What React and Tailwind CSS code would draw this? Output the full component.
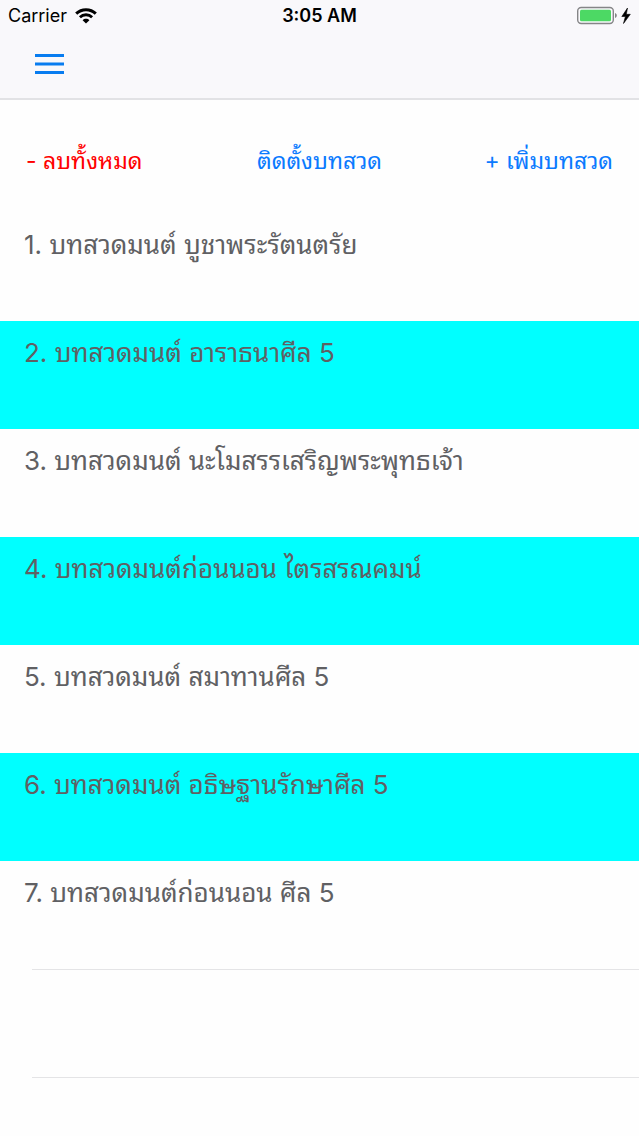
const rows = [
  'บทสวดมนต์ บูชาพระรัตนตรัย',
  'บทสวดมนต์ อาราธนาศีล 5',
  'บทสวดมนต์ นะโมสรรเสริญพระพุทธเจ้า',
  'บทสวดมนต์ก่อนนอน ไตรสรณคมน์',
  'บทสวดมนต์ สมาทานศีล 5',
  'บทสวดมนต์ อธิษฐานรักษาศีล 5',
  'บทสวดมนต์ก่อนนอน ศีล 5',
];

function StatusBar() {
  return (
    <div className="grid h-8 grid-cols-3 items-center px-2 text-lg leading-8 text-black">
      <div className="flex items-center gap-2">
        <span>Carrier</span>
        <svg className="h-4 w-[22px]" viewBox="0 0 22 16" fill="none" stroke="black" aria-hidden="true">
          <path d="M1.2 5.6C6.7.3 15.3.3 20.8 5.6" strokeWidth="3" />
          <path d="M4.9 9.2c3.4-3.3 8.8-3.3 12.2 0" strokeWidth="2.8" />
          <path d="M11 15.6 7.6 12.2c1.9-1.8 4.9-1.8 6.8 0z" fill="black" stroke="none" />
        </svg>
      </div>
      <span className="text-center font-semibold">3:05 AM</span>
      <div className="flex items-center justify-end">
        <svg className="h-5 w-[54px]" viewBox="0 0 54 20" aria-hidden="true">
          <rect x="0.7" y="1.500" width="35.600" height="16" rx="3.500" fill="none" stroke="#858587" strokeWidth="1.400" />
          <rect x="3" y="3.800" width="31" height="11.400" rx="1.500" fill="#4cd964" />
          <path d="M38 7c2.400 1 2.400 4 0 5z" fill="#858587" />
          <path d="M50.500 2 44.800 10.500h3.600L46.500 17.500l6.800-9.200h-4z" fill="black" stroke="black" strokeWidth="0.600" />
        </svg>
      </div>
    </div>
  );
}

export default function App() {
  return (
    <div className="min-h-screen bg-[#fefefe] font-['Inter','Noto_Sans_Thai_Looped','Loma','Garuda','Waree','Noto_Sans_Thai',sans-serif]">
      <header className="border-b-2 border-[#e2e2e5] bg-[#f9f8fb]">
        <StatusBar />
        <div className="flex h-[66px] items-start pl-[35px] pt-[22px]">
          <button type="button" aria-label="Menu" className="block">
            <svg className="block h-5 w-[29px]" viewBox="0 0 29 20" stroke="#087cf0" strokeWidth="3" aria-hidden="true">
              <path d="M0 1.500h29M0 10h29M0 18.500h29" />
            </svg>
          </button>
        </div>
      </header>
      <main>
        <div className="grid h-[113px] grid-cols-3 items-center px-[26px] pt-2 text-[23px] leading-8">
          <button type="button" className="justify-self-start text-[#ff0000]">- ลบทั้งหมด</button>
          <button type="button" className="justify-self-center text-[#0a7aff]">ติดตั้งบทสวด</button>
          <button type="button" className="justify-self-end text-[#0a7aff]">+ เพิ่มบทสวด</button>
        </div>
        <ol>
          {rows.map((title, i) => (
            <li key={title} className="h-[108px] px-6 pt-3 text-[26px] leading-10 text-[#606063] even:bg-[#00ffff]">
              {i + 1}. {title}
            </li>
          ))}
        </ol>
        <div className="ml-8 border-t border-[#e4e4e6] pb-[107px]" />
        <div className="ml-8 border-t border-[#e4e4e6]" />
      </main>
    </div>
  );
}
